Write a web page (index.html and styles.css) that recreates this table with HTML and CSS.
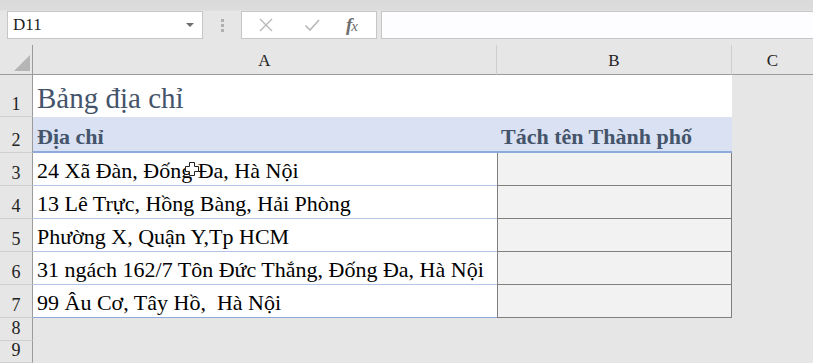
FILE: index.html
```html
<!DOCTYPE html>
<html>
<head>
<meta charset="utf-8">
<link rel="stylesheet" href="styles.css">
</head>
<body>
<div class="app">
  <div class="toolbar">
    <div class="namebox">
      <span class="name">D11</span>
      <svg class="caret" width="8" height="5" viewBox="0 0 8 5"><path d="M0 0h8L4 4z" fill="#6d6d6d"/></svg>
    </div>
    <div class="grip"><i></i><i></i><i></i></div>
    <div class="fxbox">
      <svg class="ico" width="16" height="16" viewBox="0 0 16 16"><path d="M2 2L14 14M14 2L2 14" stroke="#b8b8b8" stroke-width="1.4" fill="none"/></svg>
      <svg class="ico" width="16" height="16" viewBox="0 0 16 16"><path d="M1.5 8.5L6 13L15 3" stroke="#b8b8b8" stroke-width="1.6" fill="none"/></svg>
      <span class="fx"><i>f</i><i class="x">x</i></span>
    </div>
    <div class="formula"></div>
  </div>
  <div class="sheet">
    <div class="corner"><svg width="16" height="16" viewBox="0 0 16 16"><path d="M16 0V16H0z" fill="#b5b5b5"/></svg></div>
    <div class="colh">A</div>
    <div class="colh">B</div>
    <div class="colh last">C</div>

    <div class="rowh">1</div>
    <div class="cell title">Bảng địa chỉ</div>
    <div class="cell white"></div>
    <div class="cell grey"></div>

    <div class="rowh">2</div>
    <div class="cell head">Địa chỉ</div>
    <div class="cell head">Tách tên Thành phố</div>
    <div class="cell grey"></div>

    <div class="rowh">3</div>
    <div class="cell data">24 Xã Đàn, Đống Đa, Hà Nội</div>
    <div class="cell out"></div>
    <div class="cell grey"></div>

    <div class="rowh">4</div>
    <div class="cell data">13 Lê Trực, Hồng Bàng, Hải Phòng</div>
    <div class="cell out"></div>
    <div class="cell grey"></div>

    <div class="rowh">5</div>
    <div class="cell data">Phường X, Quận Y,Tp HCM</div>
    <div class="cell out"></div>
    <div class="cell grey"></div>

    <div class="rowh">6</div>
    <div class="cell data">31 ngách 162/7 Tôn Đức Thắng, Đống Đa, Hà Nội</div>
    <div class="cell out"></div>
    <div class="cell grey"></div>

    <div class="rowh">7</div>
    <div class="cell data lastdata">99 Âu Cơ, Tây Hồ,&nbsp; Hà Nội</div>
    <div class="cell out lastout"></div>
    <div class="cell grey"></div>

    <div class="rowh">8</div>
    <div class="cell grey"></div>
    <div class="cell grey"></div>
    <div class="cell grey"></div>

    <div class="rowh">9</div>
    <div class="cell grey"></div>
    <div class="cell grey"></div>
    <div class="cell grey"></div>

    <svg class="cursor" width="14" height="14" viewBox="0 0 14 14"><path d="M4.5 0.5h5v4h4v5h-4v4h-5v-4h-4v-5h4z" fill="#fff" stroke="#222" stroke-width="1"/></svg>
  </div>
</div>
</body>
</html>
```
FILE: styles.css
```css
* { box-sizing: border-box; }
html, body { margin: 0; padding: 0; }
body {
  width: 813px;
  height: 363px;
  overflow: hidden;
  background: #e6e6e6;
  font-family: "Liberation Serif", "Times New Roman", serif;
}
.app { width: 813px; height: 363px; }

.toolbar {
  height: 45px;
  display: flex;
  align-items: flex-start;
  padding-top: 11px;
  background: linear-gradient(#dadada 0, #dcdcdc 10px, #e6e6e6 11px);
}
.namebox {
  margin-left: 7px;
  width: 196px;
  height: 28px;
  background: #fff;
  border: 1px solid #c6c6c6;
  display: flex;
  align-items: center;
  justify-content: space-between;
  padding: 0 8px 0 5px;
}
.name { font-size: 17px; color: #222; }
.caret { margin-top: 1px; }
.grip {
  width: 38px;
  height: 28px;
  display: flex;
  flex-direction: column;
  align-items: center;
  justify-content: center;
  gap: 2px;
}
.grip i { width: 3px; height: 3px; background: #b0b0b0; display: block; }
.fxbox {
  width: 136px;
  height: 28px;
  background: #fff;
  border: 1px solid #c6c6c6;
  display: flex;
  align-items: center;
  padding-left: 16px;
  gap: 30px;
}
.fx { font-size: 19px; color: #6d6d6d; font-style: italic; margin-left: -4px; letter-spacing: -1px; }
.fx i { font-weight: bold; }
.fx .x { font-weight: normal; font-size: 15px; }
.formula {
  margin-left: 4px;
  flex: 1;
  height: 28px;
  background: #fdfdff;
  border-top: 1px solid #c6c6c6;
  border-bottom: 1px solid #c6c6c6;
  border-left: 1px solid #c6c6c6;
}

.sheet {
  position: relative;
  display: grid;
  grid-template-columns: 33px 464px 235px 81px;
  grid-template-rows: 30px 42px 36px 33px 33px 33px 33px 33px 23px 22px;
}
.corner {
  border-right: 1px solid #9b9b9b;
  border-bottom: 1px solid #9b9b9b;
  display: flex;
  align-items: flex-end;
  justify-content: flex-end;
  padding: 0 2px 3px 0;
}
.colh {
  border-right: 1px solid #cfcfcf;
  border-bottom: 1px solid #9b9b9b;
  font-size: 17px;
  color: #222;
  display: flex;
  align-items: flex-end;
  justify-content: center;
  padding-bottom: 3px;
}
.colh.last { border-right: none; }
.rowh {
  border-right: 1px solid #9b9b9b;
  border-bottom: 1px solid #cfcfcf;
  font-size: 18px;
  color: #222;
  display: flex;
  align-items: flex-end;
  justify-content: center;
  padding-bottom: 3px;
  line-height: 1;
}
.cell {
  display: flex;
  align-items: flex-end;
  padding: 0 4px 4px 4px;
  white-space: nowrap;
  line-height: 1;
}
.white { background: #fff; }
.grey { background: #e6e6e6; }
.title {
  background: #fff;
  font-size: 29px;
  color: #44546a;
  padding-bottom: 4px;
}
.head {
  background: #d9e1f2;
  border-bottom: 2px solid #8ea9db;
  font-size: 22px;
  font-weight: bold;
  color: #44546a;
  padding-bottom: 3px;
}
.data {
  background: #fff;
  font-size: 22px;
  color: #000;
  border-bottom: 1px solid #b4c6e7;
  padding-bottom: 3px;
}
.data.lastdata { border-bottom: 1px solid #8ea9db; }
.out {
  background: #f2f2f2;
  border-left: 1px solid #7f7f7f;
  border-right: 1px solid #7f7f7f;
  border-bottom: 1px solid #7f7f7f;
}
.cursor {
  position: absolute;
  left: 185px;
  top: 117px;
}
```
